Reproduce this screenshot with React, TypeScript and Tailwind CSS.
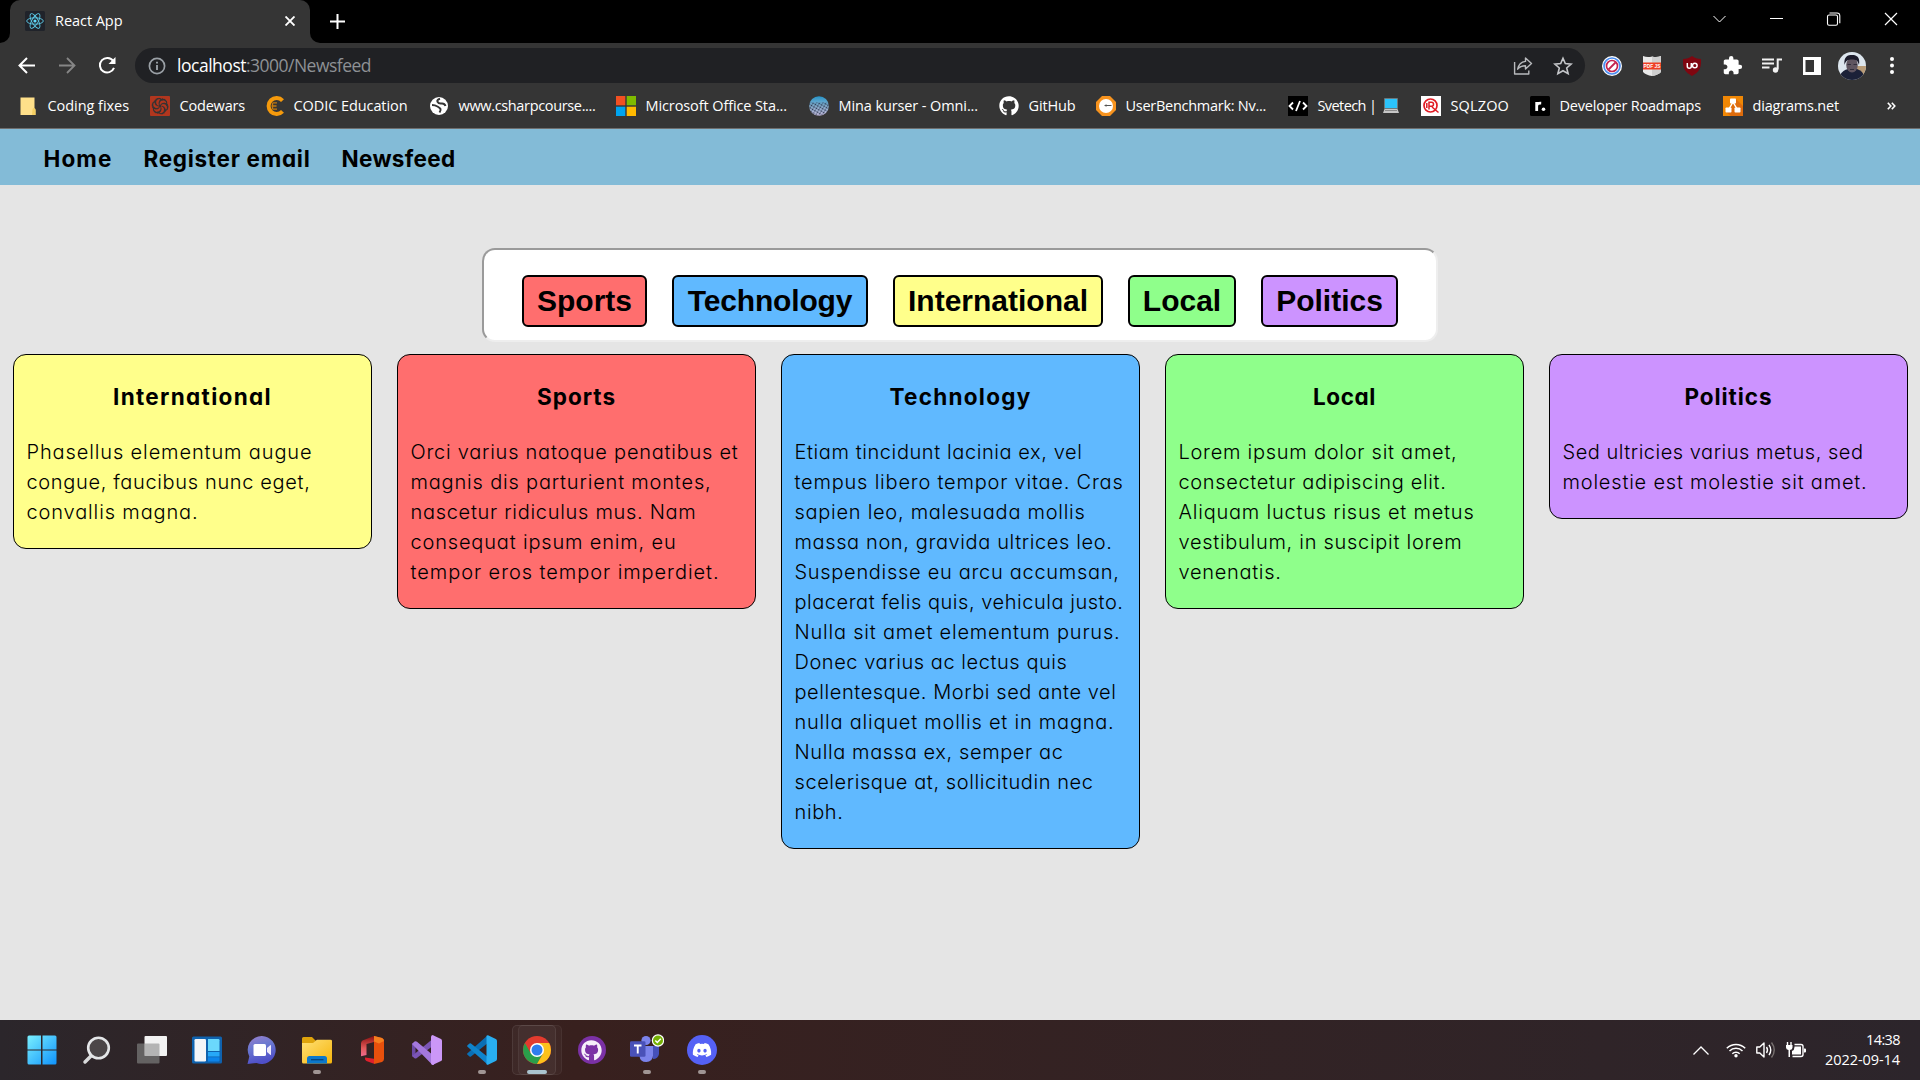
import { useLayoutEffect, useRef, useState } from "react";
import type { ReactNode } from "react";
import { FaGithub, FaDiscord } from "react-icons/fa";
import { SiCodewars } from "react-icons/si";
import { MdExtension } from "react-icons/md";

/** A single line of text whose tracking is adjusted to fill a given width. */
function Fit({ w, children, className = "" }: { w: number; children: string; className?: string }) {
  const ref = useRef<HTMLSpanElement>(null);
  const [spacing, setSpacing] = useState(0);
  useLayoutEffect(() => {
    const el = ref.current;
    if (!el) return;
    el.style.letterSpacing = "0px";
    const natural = el.getBoundingClientRect().width;
    const value = (w - natural) / children.length;
    el.style.letterSpacing = `${value}px`;
    setSpacing(value);
  }, [w, children]);
  return (
    <span ref={ref} className={`inline-block whitespace-pre ${className}`} style={{ letterSpacing: `${spacing}px` }}>
      {children}
    </span>
  );
}

function ReactLogo() {
  return (
    <svg width="20" height="20" viewBox="0 0 20 20">
      <rect width="20" height="20" rx="1.5" fill="#20232a" />
      <g fill="none" stroke="#5ccbe8" strokeWidth="0.9">
        <ellipse cx="10" cy="10" rx="8.3" ry="3.2" />
        <ellipse cx="10" cy="10" rx="8.3" ry="3.2" transform="rotate(60 10 10)" />
        <ellipse cx="10" cy="10" rx="8.3" ry="3.2" transform="rotate(120 10 10)" />
      </g>
      <circle cx="10" cy="10" r="1.6" fill="#61dafb" />
    </svg>
  );
}

function TabStrip() {
  return (
    <div className="flex h-[43px] bg-black">
      <div className="w-[10px] bg-[#353535]">
        <div className="h-full rounded-br-[10px] bg-black" />
      </div>
      <div className="flex w-[300px] items-start bg-black">
        <div className="flex h-[43px] w-full items-center rounded-t-[10px] bg-[#353535] pb-px pl-[15px]">
          <ReactLogo />
          <div className="ml-[10px] w-[229px] pb-px text-[14.5px] leading-5 text-white">
            <Fit w={67.5}>React App</Fit>
          </div>
          <svg className="ml-px" width="10" height="10" viewBox="0 0 10 10" stroke="#fff" strokeWidth="1.9">
            <path d="M0.5 0.5l9 9M9.5 0.5l-9 9" />
          </svg>
        </div>
      </div>
      <div className="w-[10px] bg-[#353535]">
        <div className="h-full rounded-bl-[10px] bg-black" />
      </div>
      <svg className="mt-[14px] ml-[10px]" width="15" height="15" viewBox="0 0 15 15" stroke="#fff" strokeWidth="2">
        <path d="M7.5 0v15M0 7.5h15" />
      </svg>
      <div className="ml-auto flex h-[37px] items-center text-white">
        <svg width="57" height="14" viewBox="0 0 57 14" fill="none" stroke="currentColor" strokeWidth="1">
          <path d="M22.5 4l6 6 6-6" />
        </svg>
        <svg width="57" height="14" viewBox="0 0 57 14" stroke="currentColor" strokeWidth="1">
          <path d="M22 6.5h13" />
        </svg>
        <svg width="57" height="14" viewBox="0 0 57 14" fill="none" stroke="currentColor" strokeWidth="1.1">
          <rect x="22.5" y="3" width="10" height="10.3" rx="1.6" />
          <path d="M24.5 1h7.5a2.8 2.8 0 0 1 2.8 2.8V11.3" />
        </svg>
        <svg width="58" height="14" viewBox="0 0 58 14" stroke="currentColor" strokeWidth="1.2">
          <path d="M23 1l12 12M35 1l-12 12" />
        </svg>
      </div>
    </div>
  );
}

function Slot({ children }: { children: ReactNode }) {
  return <div className="flex w-10 items-center justify-center">{children}</div>;
}

function Toolbar() {
  return (
    <div className="flex h-[45px] items-center bg-[#353535] pl-[7px]">
      <Slot>
        <svg width="18" height="18" viewBox="0 0 18 18" fill="none" stroke="#fff" strokeWidth="2">
          <path d="M17 8.5H2M9 1L1.5 8.5 9 16" />
        </svg>
      </Slot>
      <Slot>
        <svg width="18" height="18" viewBox="0 0 18 18" fill="none" stroke="#868686" strokeWidth="1.8">
          <path d="M1 8.5h15M9 1l7.500 7.500L9 16" />
        </svg>
      </Slot>
      <Slot>
        <svg width="20" height="20" viewBox="0 0 20 20" fill="none" stroke="#fff" strokeWidth="2">
          <path d="M16.2 5A7.3 7.3 0 1 0 17 11.9" />
          <path d="M18.5 1v7h-7z" fill="#fff" stroke="none" />
        </svg>
      </Slot>
      <div className="ml-2 flex h-[35px] w-[1450px] items-center rounded-full bg-[#202124] pl-[13px]">
        <svg width="18" height="18" viewBox="0 0 18 18" fill="none" stroke="#9aa0a6" strokeWidth="1.7">
          <circle cx="9" cy="9" r="7.6" />
          <path d="M9 8v5M9 4.8v1.8" strokeWidth="1.9" />
        </svg>
        <div className="ml-[11px] flex pb-[2px] text-[17.5px] leading-6">
          <Fit w={69} className="text-white">localhost</Fit>
          <Fit w={125} className="text-[#8e9195]">:3000/Newsfeed</Fit>
        </div>
        <div className="mr-[2.5px] ml-auto flex">
          <Slot>
            <svg width="20" height="20" viewBox="0 0 20 20" fill="none" stroke="#b8babd" strokeWidth="1.4" strokeLinejoin="round">
              <path d="M1.6 6v12h14.2v-3.5" />
              <path d="M12.5 2l6 5.6-6 5.4V9.8c-3.6 0-6 1-7.8 3.4.7-4.2 3.2-7.2 7.8-7.8z" />
            </svg>
          </Slot>
          <Slot>
            <svg width="20" height="20" viewBox="0 0 20 20" fill="none" stroke="#c4c6c9" strokeWidth="1.6">
              <path d="M10 2.2l2.3 5.400 5.900.5-4.500 3.900 1.400 5.700-5.100-3-5.100 3 1.400-5.700L1.800 8.100l5.900-.5z" />
            </svg>
          </Slot>
        </div>
      </div>
      <div className="ml-[7px] flex">
        <Slot>
          <svg width="20" height="20" viewBox="0 0 20 20" fill="none">
            <circle cx="10" cy="10" r="10" fill="#fff" />
            <circle cx="10" cy="10" r="8" stroke="#4a8cf0" strokeWidth="1.7" />
            <circle cx="10" cy="10" r="5.5" fill="#fff" stroke="#c4234f" strokeWidth="1.7" />
            <path d="M6.500 13.500l7-7" stroke="#c4234f" strokeWidth="1.8" />
          </svg>
        </Slot>
        <Slot>
          <svg width="18" height="20" viewBox="0 0 18 20">
            <path d="M0 0q4.500 1.800 9 .4 4.500 1.400 9-.4v16q-3 3-9 4-6-1-9-4z" fill="#e9e9e9" />
            <path d="M9 .4v19.600q6-1 9-4V0q-4.500 1.800-9 .4z" fill="#cfcfcf" />
            <rect y="6.500" width="18" height="7" fill="#ef3e24" />
            <text x="9" y="11.800" fontSize="4.800" fontWeight="700" fontFamily="Liberation Sans, sans-serif" textAnchor="middle" fill="#fff">PDF JS</text>
          </svg>
        </Slot>
        <Slot>
          <svg width="18" height="20" viewBox="0 0 18 20" fill="none">
            <path d="M9 0c2.500 2 5.500 3 9 3 .3 8-1 13-9 17C1 16-.3 11 0 3c3.500 0 6.500-1 9-3z" fill="#800610" />
            <path d="M4.300 7v3.200a2 2 0 0 0 4 0V7" stroke="#fff" strokeWidth="1.500" />
            <circle cx="11.800" cy="9.500" r="2.300" stroke="#fff" strokeWidth="1.500" />
          </svg>
        </Slot>
        <Slot><MdExtension size={21} color="#fff" /></Slot>
        <Slot>
          <svg width="20" height="18" viewBox="0 0 20 18" fill="none" stroke="#f2f2f2" strokeWidth="2">
            <path d="M0 2.500h12M0 6.500h12M0 10.500h7.500M20 2.500h-4.300v10" />
            <circle cx="13.500" cy="13" r="2.700" fill="#f2f2f2" stroke="none" />
          </svg>
        </Slot>
        <Slot>
          <svg width="18" height="18" viewBox="0 0 18 18">
            <path d="M0 0h18v18H0zM2.500 3v12H11V3z" fill="#fff" fillRule="evenodd" />
          </svg>
        </Slot>
        <Slot>
          <svg className="rounded-full" width="28" height="28" viewBox="0 0 28 28">
            <rect width="28" height="28" fill="#dde6ee" />
            <path d="M19 14h9v9h-9z" fill="#b99c78" />
            <path d="M2 23q3-5 8-6h9q6 2 7 7l-4 4H6z" fill="#1b2138" />
            <ellipse cx="14" cy="13" rx="5.800" ry="7.500" fill="#5f5560" />
            <path d="M6.500 13C5.500 4 10 3 14 3s8.500 1.500 7 10c-1.200-4.500-3-5.500-7-5.500S7.700 8.500 6.500 13z" fill="#1c1c2c" />
            <path d="M9.500 12.500h3.500M15.500 12.500H19M12 17.500h4" stroke="#302d3b" strokeWidth="1" />
          </svg>
        </Slot>
        <Slot>
          <svg width="4" height="17" viewBox="0 0 4 17" fill="#fff">
            <circle cx="2" cy="2" r="2" />
            <circle cx="2" cy="8.500" r="2" />
            <circle cx="2" cy="15" r="2" />
          </svg>
        </Slot>
      </div>
    </div>
  );
}

const bookmarks: { label: string; w: number; slot: string; icon: ReactNode }[] = [
  {
    label: "Coding fixes", w: 81.5, slot: "w-[132px]",
    icon: (
      <svg width="20" height="20" viewBox="0 0 20 20">
        <path d="M2.500 1.500h14v12h1V19h-15z" fill="#ffe08a" />
        <path d="M14.500 13.500q0-1.500 1.500-1.500t1.500 1.500V19h-3.500z" fill="#f5cf62" />
      </svg>
    ),
  },
  {
    label: "Codewars", w: 65.5, slot: "w-[114px]",
    icon: <div className="flex size-5 items-center justify-center bg-[#343233]"><SiCodewars size={20} color="#b1361e" /></div>,
  },
  {
    label: "CODIC Education", w: 114, slot: "w-[165px]",
    icon: (
      <svg width="20" height="20" viewBox="0 0 20 20" fill="none">
        <path d="M18.500 4.600A8 8 0 1 0 18.500 15.400" stroke="#f59a0c" strokeWidth="4" />
        <path d="M8.500 6.800h4.500M7.500 10h5M8.500 13.200h4.500M8.500 7v6.200" stroke="#c47a10" strokeWidth="1.300" />
      </svg>
    ),
  },
  {
    label: "www.csharpcourse....", w: 137, slot: "w-[187px]",
    icon: (
      <svg width="20" height="20" viewBox="0 0 20 20">
        <circle cx="10" cy="10" r="9" fill="#fff" />
        <path d="M11 2.800q-3.500 1-2.500 3t4 1.700 4 2.500M3 9q3 0 5.500 1.500t3 2.500-1 3.500" stroke="#353535" strokeWidth="2" fill="none" />
      </svg>
    ),
  },
  {
    label: "Microsoft Office Sta...", w: 141.5, slot: "w-[193px]",
    icon: (
      <svg width="20" height="20" viewBox="0 0 20 20">
        <path d="M0 0h9.300v9.300H0z" fill="#f25022" />
        <path d="M10.700 0H20v9.300h-9.300z" fill="#7fba00" />
        <path d="M0 10.700h9.300V20H0z" fill="#00a4ef" />
        <path d="M10.700 10.700H20V20h-9.300z" fill="#ffb900" />
      </svg>
    ),
  },
  {
    label: "Mina kurser - Omni...", w: 139.5, slot: "w-[190px]",
    icon: (
      <svg width="20" height="20" viewBox="0 0 20 20">
        <defs>
          <linearGradient id="omni" x1="0" y1="0" x2="0" y2="1">
            <stop offset="0" stopColor="#2493c8" />
            <stop offset=".45" stopColor="#7fb0d0" />
            <stop offset="1" stopColor="#d3c5e6" />
          </linearGradient>
          <pattern id="mesh" width="2.800" height="2.800" patternUnits="userSpaceOnUse" patternTransform="rotate(30)">
            <circle cx="1.400" cy="1.400" r=".95" fill="#2a3550" />
          </pattern>
        </defs>
        <circle cx="10" cy="10" r="9.800" fill="url(#omni)" />
        <path d="M.7 6.500h18.600A9.800 9.800 0 1 1 .7 6.500z" fill="url(#mesh)" />
      </svg>
    ),
  },
  { label: "GitHub", w: 47, slot: "w-[97px]", icon: <FaGithub size={20} color="#fff" /> },
  {
    label: "UserBenchmark: Nv...", w: 140.5, slot: "w-[192px]",
    icon: (
      <svg width="20" height="20" viewBox="0 0 20 20">
        <path d="M6 0h8l6 6v8l-6 6H6l-6-6V6z" fill="#f7931e" />
        <circle cx="10" cy="10" r="7" fill="#fff" />
        <path d="M8 9.500l2.500-1.300v.8h5v1h-5v.8z" fill="#555" />
      </svg>
    ),
  },
  {
    label: "Svetech |", w: 59, slot: "w-[133px]",
    icon: (
      <svg width="20" height="20" viewBox="0 0 20 20" fill="none" stroke="#fff" strokeWidth="1.800">
        <rect width="20" height="20" fill="#000" stroke="none" />
        <path d="M5 6.500L1.500 10 5 13.500M15 6.500l3.500 3.500-3.500 3.500M12 5l-4 10" />
      </svg>
    ),
  },
  {
    label: "SQLZOO", w: 58.5, slot: "w-[109px]",
    icon: (
      <svg width="20" height="20" viewBox="0 0 20 20" fill="none" stroke="#e01b24">
        <rect width="20" height="20" fill="#fff" stroke="none" />
        <circle cx="9.500" cy="9.500" r="6.500" strokeWidth="1.700" />
        <path d="M8 13.500V6.300h2.500q2 0 2 2t-2 2H8M11 11l6.500 5.500M5.800 7v5" strokeWidth="1.500" />
      </svg>
    ),
  },
  {
    label: "Developer Roadmaps", w: 141.5, slot: "w-[193px]",
    icon: (
      <svg width="20" height="20" viewBox="0 0 20 20" fill="none" stroke="#fff">
        <rect width="20" height="20" rx="1.500" fill="#000" stroke="none" />
        <path d="M6.700 15V6M6.700 9.500q.5-2.500 4.500-2.300" strokeWidth="2.800" />
        <circle cx="13.500" cy="13.300" r="1.800" fill="#fff" stroke="none" />
      </svg>
    ),
  },
  {
    label: "diagrams.net", w: 86.5, slot: "w-[160px]",
    icon: (
      <svg width="20" height="20" viewBox="0 0 20 20">
        <rect width="20" height="20" fill="#f08705" />
        <path d="M13 3l7 7v10H8l-5-4z" fill="#df6c0c" />
        <path d="M10 6L6 13M10 6l4 7" stroke="#fff" strokeWidth="1.500" />
        <rect x="7" y="2.500" width="6" height="5" rx=".8" fill="#fff" />
        <rect x="2.500" y="11.500" width="6" height="5" rx=".8" fill="#fff" />
        <rect x="11.500" y="11.500" width="6" height="5" rx=".8" fill="#fff" />
      </svg>
    ),
  },
];

function Laptop() {
  return (
    <svg className="ml-[6px]" width="16" height="16" viewBox="0 0 16 16">
      <rect x="1" y="0" width="14" height="11" rx=".8" fill="#69797e" />
      <rect x="2" y="1" width="12" height="9" fill="#2bc3fb" />
      <path d="M1.500 11h13l1.500 4H0z" fill="#c6c6c6" />
      <path d="M2 12.500h12" stroke="#8a8a8a" />
    </svg>
  );
}

function BookmarkBar() {
  return (
    <div className="flex h-[41px] items-center border-b border-[#6e6e6e] bg-[#353535] pb-[5px] pl-[18px] text-[14.5px] leading-5 text-white">
      {bookmarks.map((b) => (
        <div key={b.label} className={`flex shrink-0 items-center ${b.slot}`}>
          <div className="mr-[9.5px] size-5">{b.icon}</div>
          <Fit w={b.w}>{b.label}</Fit>
          {b.label === "Svetech |" && <Laptop />}
        </div>
      ))}
      <svg className="ml-1" width="9" height="8" viewBox="0 0 9 8" fill="none" stroke="#fff" strokeWidth="1.600">
        <path d="M.8.8L3.800 4l-3 3.200M4.800.8l3 3.200-3 3.200" />
      </svg>
    </div>
  );
}

const filters = [
  { name: "Sports", style: "w-[125px] bg-[#ff6e6e]", w: 95 },
  { name: "Technology", style: "w-[196px] bg-[#60b9ff]", w: 164.5 },
  { name: "International", style: "w-[210px] bg-[#ffff8b]", w: 180 },
  { name: "Local", style: "w-[108px] bg-[#8fff8b]", w: 78.3 },
  { name: "Politics", style: "w-[137px] bg-[#cc93ff]", w: 106.7 },
];

const cards: { title: string; w: number; color: string; lines: [string, number][] }[] = [
  {
    title: "International", w: 159, color: "bg-[#ffff8b]",
    lines: [["Phasellus elementum augue", 286], ["congue, faucibus nunc eget,", 284], ["convallis magna.", 172]],
  },
  {
    title: "Sports", w: 79, color: "bg-[#ff6e6e]",
    lines: [
      ["Orci varius natoque penatibus et", 328], ["magnis dis parturient montes,", 301], ["nascetur ridiculus mus. Nam", 286],
      ["consequat ipsum enim, eu", 266], ["tempor eros tempor imperdiet.", 309],
    ],
  },
  {
    title: "Technology", w: 142, color: "bg-[#60b9ff]",
    lines: [
      ["Etiam tincidunt lacinia ex, vel", 288], ["tempus libero tempor vitae. Cras", 329], ["sapien leo, malesuada mollis", 291],
      ["massa non, gravida ultrices leo.", 318], ["Suspendisse eu arcu accumsan,", 325], ["placerat felis quis, vehicula justo.", 329],
      ["Nulla sit amet elementum purus.", 326], ["Donec varius ac lectus quis", 273], ["pellentesque. Morbi sed ante vel", 322],
      ["nulla aliquet mollis et in magna.", 320], ["Nulla massa ex, semper ac", 269], ["scelerisque at, sollicitudin nec", 299], ["nibh.", 49],
    ],
  },
  {
    title: "Local", w: 63, color: "bg-[#8fff8b]",
    lines: [
      ["Lorem ipsum dolor sit amet,", 279], ["consectetur adipiscing elit.", 268], ["Aliquam luctus risus et metus", 296],
      ["vestibulum, in suscipit lorem", 284], ["venenatis.", 103],
    ],
  },
  {
    title: "Politics", w: 88, color: "bg-[#cc93ff]",
    lines: [["Sed ultricies varius metus, sed", 301], ["molestie est molestie sit amet.", 305]],
  },
];

function NewsPage() {
  return (
    <main className="h-[891px] bg-[#e5e5e5] font-['Inter',sans-serif] text-black [font-feature-settings:'cv11']">
      <nav className="flex h-[56px] items-center gap-[31px] bg-[#83bbd7] pt-[3px] pl-[43.5px] text-[22.5px] font-bold">
        <Fit w={69}>Home</Fit>
        <Fit w={167}>Register email</Fit>
        <Fit w={114}>Newsfeed</Fit>
      </nav>
      <div className="mx-auto mt-[63px] flex h-[94px] w-[956px] gap-[25px] rounded-[13px] border-2 border-t-[#9a9a9a] border-r-[#eeeeee] border-b-[#eeeeee] border-l-[#9a9a9a] bg-white pt-[25px] pl-[38px]">
        {filters.map((f) => (
          <button
            key={f.name}
            className={`flex h-[52px] items-center justify-center rounded-[6px] border-2 border-black pb-px font-['Liberation_Sans',sans-serif] text-[30px] leading-none font-bold ${f.style}`}
          >
            <Fit w={f.w}>{f.name}</Fit>
          </button>
        ))}
      </div>
      <div className="mt-3 flex items-start gap-[25px] pl-[13px]">
        {cards.map((c) => (
          <article key={c.title} className={`w-[359px] shrink-0 rounded-[13px] border border-black px-[12.5px] pt-[24px] pb-[21px] ${c.color}`}>
            <h3 className="mb-[22px] text-center text-[22.5px] leading-9 font-bold">
              <Fit w={c.w}>{c.title}</Fit>
            </h3>
            {c.lines.map(([text, w]) => (
              <p key={text} className="h-[30px] text-[20px] leading-[30px] font-light">
                <Fit w={w}>{text}</Fit>
              </p>
            ))}
          </article>
        ))}
      </div>
    </main>
  );
}

function StartIcon() {
  return (
    <svg width="30" height="30" viewBox="0 0 30 30">
      <defs>
        <linearGradient id="win" x1="0" y1="0" x2="1" y2="1">
          <stop offset="0" stopColor="#7af0ff" />
          <stop offset="1" stopColor="#0f92fb" />
        </linearGradient>
      </defs>
      <path d="M2 .5h12v14H.5V2A1.500 1.500 0 0 1 2 .5zM15.500.5H28A1.500 1.500 0 0 1 29.500 2v12.500h-14zM.5 15.500H14v14H2A1.500 1.500 0 0 1 .5 28zM15.500 15.500h14V28a1.500 1.500 0 0 1-1.500 1.500H15.500z" fill="url(#win)" />
    </svg>
  );
}

function SearchIcon() {
  return (
    <svg width="30" height="30" viewBox="0 0 30 30" fill="none">
      <path d="M3 27l7-7" stroke="#d9dadb" strokeWidth="3.500" strokeLinecap="round" />
      <circle cx="16.500" cy="13" r="10.300" fill="#4b4648" stroke="#e4e6e8" strokeWidth="2.600" />
    </svg>
  );
}

function TaskViewIcon() {
  return (
    <svg width="30" height="30" viewBox="0 0 30 30">
      <rect x="7.500" y="1" width="22.500" height="20" rx="1" fill="#f2f2f2" />
      <path d="M1 8.500h6.500V21h15v6.500q0 1-1 1H1q-1 0-1-1v-18q0-1 1-1z" fill="#646262" />
      <path d="M7.500 8.500h14q1 0 1 1V21h-15z" fill="#b4b4b4" />
    </svg>
  );
}

function WidgetsIcon() {
  return (
    <svg width="30" height="30" viewBox="0 0 30 30">
      <rect x="0" y="1.500" width="30" height="27" rx="1.500" fill="#0f62ae" />
      <rect x="2.500" y="4" width="11.500" height="22.500" rx="1.300" fill="#f4f5f7" />
      <path d="M16 4h10.300q1.200 0 1.200 1.200V16H16z" fill="#6bd8fc" />
      <path d="M16 17h11.500v4.500H16z" fill="#26a8f8" />
      <path d="M16 22.300h11.500v3q0 1.200-1.200 1.200H16z" fill="#0c84ea" />
    </svg>
  );
}

function ChatIcon() {
  return (
    <svg width="30" height="30" viewBox="0 0 30 30">
      <defs>
        <linearGradient id="chat" x1="0" y1="0" x2=".3" y2="1">
          <stop offset="0" stopColor="#9a80cc" />
          <stop offset=".45" stopColor="#6a78d0" />
          <stop offset="1" stopColor="#4f4fc8" />
        </linearGradient>
      </defs>
      <path d="M15 1a14 14 0 1 1-5.500 27L.5 29l1.800-7.500A14 14 0 0 1 15 1z" fill="url(#chat)" />
      <rect x="6.500" y="9" width="12.500" height="12" rx="1.500" fill="#fff" />
      <path d="M20 13l3.500-3q.5 0 .5.500v9q0 .5-.5.500L20 17z" fill="#eee9fa" />
    </svg>
  );
}

function ExplorerIcon() {
  return (
    <svg width="30" height="30" viewBox="0 0 30 30">
      <defs>
        <linearGradient id="folder" x1="0" y1="0" x2="1" y2="1">
          <stop offset="0" stopColor="#ffe075" />
          <stop offset="1" stopColor="#f6b50c" />
        </linearGradient>
      </defs>
      <path d="M1.500 2H10l3.500 3.500H28V14H0V3.500Q0 2 1.500 2z" fill="#dea30b" />
      <path d="M0 8h11l4-3.200h13.500Q30 4.800 30 6v21q0 1.500-1.500 1.500h-27Q0 28.500 0 27z" fill="url(#folder)" />
      <path d="M7.500 21h15q2.500 0 2.500 2.500v5H5v-5Q5 21 7.500 21z" fill="#0c78cb" />
      <path d="M9 24.700h12.500" stroke="#07447c" strokeWidth="1.300" />
    </svg>
  );
}

function OfficeIcon() {
  return (
    <svg width="30" height="30" viewBox="0 0 30 30">
      <defs>
        <linearGradient id="off" x1="0" y1="0" x2="0" y2="1">
          <stop offset="0" stopColor="#8c1010" />
          <stop offset=".6" stopColor="#e15a5a" />
          <stop offset="1" stopColor="#f06a90" />
        </linearGradient>
      </defs>
      <path d="M17 1L5.500 5.500Q4 6.500 4 8.500v12.800L9.500 20V9l7.500-2z" fill="url(#off)" />
      <path d="M17 1l8 2q2 .8 2 3v18q0 2.200-2 3l-8 2z" fill="#e8500c" />
      <path d="M17 1l8 2q2 .8 2 3l-5 2.500-5-2z" fill="#f57f1f" />
      <path d="M8 22.500l9 1.300v5L9.300 26Q7.500 24.500 8 22.500z" fill="#e0202c" />
    </svg>
  );
}

function VisualStudioIcon() {
  return (
    <svg width="30" height="30" viewBox="0 0 30 30">
      <path d="M0 8.500l3.500-1.500v16L0 21z" fill="#6c4aa6" />
      <path d="M0 21L20 4.500 22 0v10L4.500 23.200q-1 .5-2 0z" fill="#7b55b5" />
      <path d="M2.500 6.500Q4 5.800 5 6.800L22 21v9l-2-.5L0 9z" fill="#a478dd" />
      <path d="M20.500 0L29 4q1 .5 1 1.500v19q0 1-1 1.500l-8.500 4q-1.500-.5-1.500-2V2q0-1.500 1.500-2z" fill="#cb97f7" />
    </svg>
  );
}

function VSCodeIcon() {
  return (
    <svg width="30" height="30" viewBox="0 0 30 30">
      <path d="M22 7L4 21.500q-.8.500-1.500 0L.5 19.700q-.8-.8 0-1.500L20.500.5z" fill="#0a6fb5" />
      <path d="M22 23L4 8.500q-.8-.5-1.500 0L.5 10.300q-.8.800 0 1.500l20 17.700z" fill="#0f84cc" />
      <path d="M21 .2L28.800 4q1.200.6 1.200 2v18q0 1.400-1.200 2L21 29.800q-.7.200-1.500-.5V.7q.8-.7 1.500-.5z" fill="#29aef0" />
    </svg>
  );
}

function ChromeIcon() {
  return (
    <svg width="28" height="28" viewBox="0 0 28 28">
      <circle cx="14" cy="14" r="14" fill="#e33b2e" />
      <path d="M1.900 7A14 14 0 0 0 14 28l6-10.500L14 14 7.900 17.500z" fill="#2a9f4a" />
      <path d="M26.100 7A14 14 0 0 1 14 28l6.100-10.500L14 7z" fill="#fcc21b" />
      <circle cx="14" cy="14" r="7" fill="#fff" />
      <circle cx="14" cy="14" r="5.500" fill="#2f7ded" />
    </svg>
  );
}

function GitHubDesktopIcon() {
  return (
    <div className="flex size-7 items-center justify-center rounded-full bg-[#7b31a5]">
      <FaGithub size={21} color="#f6effa" />
    </div>
  );
}

function TeamsIcon() {
  return (
    <svg width="34" height="32" viewBox="0 0 34 32">
      <circle cx="16" cy="6.500" r="4.600" fill="#7b83eb" />
      <path d="M20 12h9v8q-1 5-6 5z" fill="#4550ba" />
      <path d="M9.500 12H23v9.500q-.5 6.500-6.700 6.500-6.300 0-6.800-6z" fill="#7b83eb" />
      <rect x="0" y="7.300" width="15.500" height="15.500" rx="1.300" fill="#4951b8" />
      <path d="M4 11.500h7.500M7.750 11.500v8" stroke="#fff" strokeWidth="1.900" />
      <circle cx="28" cy="6.500" r="6.200" fill="#fff" />
      <circle cx="28" cy="6.500" r="5" fill="#76b105" />
      <path d="M25.300 6.500l2 2 3.500-3.800" fill="none" stroke="#fff" strokeWidth="1.500" />
    </svg>
  );
}

function DiscordIcon() {
  return (
    <div className="flex size-[30px] items-center justify-center rounded-full bg-[#5561f5]">
      <FaDiscord size={20} color="#fff" />
    </div>
  );
}

const apps: { id: string; icon: ReactNode; running?: boolean; active?: boolean }[] = [
  { id: "start", icon: <StartIcon /> },
  { id: "search", icon: <SearchIcon /> },
  { id: "task-view", icon: <TaskViewIcon /> },
  { id: "widgets", icon: <WidgetsIcon /> },
  { id: "chat", icon: <ChatIcon /> },
  { id: "explorer", icon: <ExplorerIcon />, running: true },
  { id: "office", icon: <OfficeIcon /> },
  { id: "visual-studio", icon: <VisualStudioIcon /> },
  { id: "vscode", icon: <VSCodeIcon />, running: true },
  { id: "chrome", icon: <ChromeIcon />, active: true },
  { id: "github", icon: <GitHubDesktopIcon /> },
  { id: "teams", icon: <TeamsIcon />, running: true },
  { id: "discord", icon: <DiscordIcon />, running: true },
];

function Taskbar() {
  return (
    <footer className="flex h-[60px] items-center bg-linear-to-r from-[#2b262b] via-[#38201e] via-30% to-[#2c252b] pl-[14px] text-white">
      {apps.map((a) => (
        <div key={a.id} className="relative flex h-[60px] w-[55px] items-center justify-center">
          {a.active && (
            <>
              <div className="absolute top-[5px] left-[9px] h-[50px] w-[44px] rounded-[5px] border border-white/5 bg-white/3" />
              <div className="absolute top-[5px] left-[3px] h-[50px] w-[44px] rounded-[5px] border border-white/8 bg-white/4" />
            </>
          )}
          <div className="relative">{a.icon}</div>
          {a.running && <div className="absolute bottom-[6px] h-1 w-2 rounded-full bg-[#a09594]" />}
          {a.active && <div className="absolute bottom-[6px] h-1 w-5 rounded-full bg-[#aac4cf]" />}
        </div>
      ))}
      <div className="mr-[20px] ml-auto flex items-center">
        <svg width="16" height="9" viewBox="0 0 16 9" fill="none" stroke="#fff" strokeWidth="1.300">
          <path d="M.5 8.500L8 1l7.500 7.500" />
        </svg>
        <svg className="ml-[17px]" width="20" height="16" viewBox="0 0 20 16" fill="none" stroke="#fff" strokeWidth="1.500">
          <path d="M.8 6.200a13 13 0 0 1 18.400 0M3.500 9a9.200 9.200 0 0 1 13 0M6.300 11.800a5.200 5.200 0 0 1 7.400 0" />
          <circle cx="10" cy="13.700" r="1.700" fill="#fff" stroke="none" />
        </svg>
        <svg className="ml-[10px]" width="20" height="18" viewBox="0 0 20 18" fill="none" stroke="#fff" strokeWidth="1.400">
          <path d="M.8 6h3L8 2v14L3.800 12h-3z" strokeLinejoin="round" />
          <path d="M10.500 6q2 3 0 6M13 3.800q3.500 5.200 0 10.400" />
          <path d="M15.500 1.500q5.500 7.500 0 15" stroke="#77706f" />
        </svg>
        <svg className="ml-[10px]" width="20" height="17" viewBox="0 0 20 17" fill="none" stroke="#fff" strokeWidth="1.400">
          <path d="M1.500 0v3M5 0v3" />
          <path d="M0 3h6.500v2.500q0 2-2.500 2.500v7H2.500V8Q0 7.500 0 5.500z" fill="#fff" stroke="none" />
          <path d="M8.500 2.500H15q2 0 2 2v8q0 2-2 2H6.500" />
          <path d="M8.500 4.500H15v8H6V9q2.500-1 2.500-4zM18 6.500h1q1 0 1 1v2q0 1-1 1h-1z" fill="#fff" stroke="none" />
        </svg>
        <div className="ml-[19px] flex w-[75px] flex-col items-end pb-px text-[14.5px] leading-5">
          <Fit w={34}>14:38</Fit>
          <Fit w={75}>2022-09-14</Fit>
        </div>
      </div>
    </footer>
  );
}

export default function App() {
  return (
    <div className="h-[1080px] w-[1920px] overflow-hidden font-['Open_Sans','Noto_Sans',sans-serif]">
      <TabStrip />
      <Toolbar />
      <BookmarkBar />
      <NewsPage />
      <Taskbar />
    </div>
  );
}
